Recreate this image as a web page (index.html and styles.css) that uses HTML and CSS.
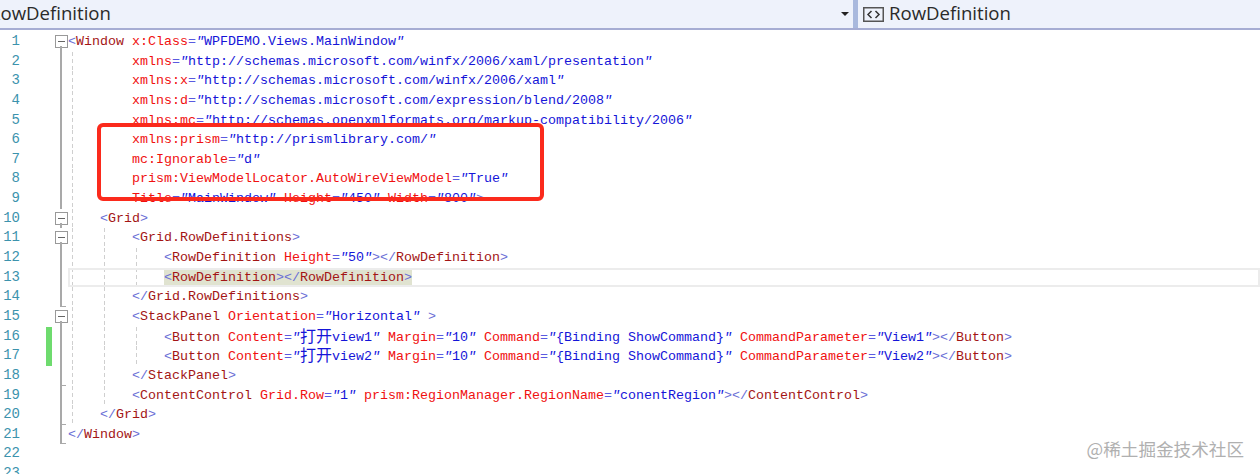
FILE: index.html
```html
<!DOCTYPE html>
<html lang="en">
<head>
<meta charset="utf-8">
<title>MainWindow.xaml</title>
<link rel="stylesheet" href="styles.css">
</head>
<body>
<header class="navbar">
  <div class="nav-left"><span class="nav-text cut">RowDefinition</span><span class="caret"></span></div>
  <div class="nav-right">
    <svg class="tag-icon" width="21" height="15" viewBox="0 0 21 15"><rect x="0.75" y="0.75" width="19.5" height="13.5" fill="none" stroke="#555" stroke-width="1.5"/><path d="M8.5 4 5 7.500l3.500 3.500M12.500 4 16 7.500 12.500 11" fill="none" stroke="#333" stroke-width="1.500"/></svg>
    <span class="nav-text">RowDefinition</span>
  </div>
</header>
<main class="editor">
<div class="line"><span class="num">1</span><span class="chg"></span><span class="fold box first"></span><code class="code"><s>&lt;</s><b>Window</b> <em>x:Class</em><s2>=</s2><i>"</i><u>WPFDEMO.Views.MainWindow</u><i>"</i></code></div>
<div class="line g1"><span class="num">2</span><span class="chg"></span><span class="fold bar"></span><code class="code">        <em>xmlns</em><s2>=</s2><i>"</i><u>http://schemas.microsoft.com/winfx/2006/xaml/presentation</u><i>"</i></code></div>
<div class="line g1"><span class="num">3</span><span class="chg"></span><span class="fold bar"></span><code class="code">        <em>xmlns:x</em><s2>=</s2><i>"</i><u>http://schemas.microsoft.com/winfx/2006/xaml</u><i>"</i></code></div>
<div class="line g1"><span class="num">4</span><span class="chg"></span><span class="fold bar"></span><code class="code">        <em>xmlns:d</em><s2>=</s2><i>"</i><u>http://schemas.microsoft.com/expression/blend/2008</u><i>"</i></code></div>
<div class="line g1"><span class="num">5</span><span class="chg"></span><span class="fold bar"></span><code class="code">        <em>xmlns:mc</em><s2>=</s2><i>"</i><u>http://schemas.openxmlformats.org/markup-compatibility/2006</u><i>"</i></code></div>
<div class="line g1"><span class="num">6</span><span class="chg"></span><span class="fold bar"></span><code class="code">        <em>xmlns:prism</em><s2>=</s2><i>"</i><u>http://prismlibrary.com/</u><i>"</i></code></div>
<div class="line g1"><span class="num">7</span><span class="chg"></span><span class="fold bar"></span><code class="code">        <em>mc:Ignorable</em><s2>=</s2><i>"</i><u>d</u><i>"</i></code></div>
<div class="line g1"><span class="num">8</span><span class="chg"></span><span class="fold bar"></span><code class="code">        <em>prism:ViewModelLocator.AutoWireViewModel</em><s2>=</s2><i>"</i><u>True</u><i>"</i></code></div>
<div class="line g1"><span class="num">9</span><span class="chg"></span><span class="fold bar"></span><code class="code">        <em>Title</em><s2>=</s2><i>"</i><u>MainWindow</u><i>"</i> <em>Height</em><s2>=</s2><i>"</i><u>450</u><i>"</i> <em>Width</em><s2>=</s2><i>"</i><u>800</u><i>"</i><s>&gt;</s></code></div>
<div class="line g1"><span class="num">10</span><span class="chg"></span><span class="fold box"></span><code class="code">    <s>&lt;</s><b>Grid</b><s>&gt;</s></code></div>
<div class="line g1 g2"><span class="num">11</span><span class="chg"></span><span class="fold box"></span><code class="code">        <s>&lt;</s><b>Grid.RowDefinitions</b><s>&gt;</s></code></div>
<div class="line g1 g2 g3"><span class="num">12</span><span class="chg"></span><span class="fold bar"></span><code class="code">            <s>&lt;</s><b>RowDefinition</b> <em>Height</em><s2>=</s2><i>"</i><u>50</u><i>"</i><s>&gt;&lt;/</s><b>RowDefinition</b><s>&gt;</s></code></div>
<div class="line g1 g2 g3 current"><span class="num">13</span><span class="chg"></span><span class="fold bar"></span><code class="code">            <mark><s>&lt;</s><b>RowDefinition</b><s>&gt;&lt;/</s><b>RowDefinition</b><s>&gt;</s></mark></code></div>
<div class="line g1 g2"><span class="num">14</span><span class="chg"></span><span class="fold bar end"></span><code class="code">        <s>&lt;/</s><b>Grid.RowDefinitions</b><s>&gt;</s></code></div>
<div class="line g1 g2"><span class="num">15</span><span class="chg"></span><span class="fold box"></span><code class="code">        <s>&lt;</s><b>StackPanel</b> <em>Orientation</em><s2>=</s2><i>"</i><u>Horizontal</u><i>"</i> <s>&gt;</s></code></div>
<div class="line g1 g2 g3"><span class="num">16</span><span class="chg on"></span><span class="fold bar"></span><code class="code">            <s>&lt;</s><b>Button</b> <em>Content</em><s2>=</s2><i>"</i><u><span class="cjk">打开</span>view1</u><i>"</i> <em>Margin</em><s2>=</s2><i>"</i><u>10</u><i>"</i> <em>Command</em><s2>=</s2><i>"</i><u>{Binding ShowCommand}</u><i>"</i> <em>CommandParameter</em><s2>=</s2><i>"</i><u>View1</u><i>"</i><s>&gt;&lt;/</s><b>Button</b><s>&gt;</s></code></div>
<div class="line g1 g2 g3"><span class="num">17</span><span class="chg on"></span><span class="fold bar"></span><code class="code">            <s>&lt;</s><b>Button</b> <em>Content</em><s2>=</s2><i>"</i><u><span class="cjk">打开</span>view2</u><i>"</i> <em>Margin</em><s2>=</s2><i>"</i><u>10</u><i>"</i> <em>Command</em><s2>=</s2><i>"</i><u>{Binding ShowCommand}</u><i>"</i> <em>CommandParameter</em><s2>=</s2><i>"</i><u>View2</u><i>"</i><s>&gt;&lt;/</s><b>Button</b><s>&gt;</s></code></div>
<div class="line g1 g2"><span class="num">18</span><span class="chg"></span><span class="fold bar end"></span><code class="code">        <s>&lt;/</s><b>StackPanel</b><s>&gt;</s></code></div>
<div class="line g1 g2"><span class="num">19</span><span class="chg"></span><span class="fold bar"></span><code class="code">        <s>&lt;</s><b>ContentControl</b> <em>Grid.Row</em><s2>=</s2><i>"</i><u>1</u><i>"</i> <em>prism:RegionManager.RegionName</em><s2>=</s2><i>"</i><u>conentRegion</u><i>"</i><s>&gt;&lt;/</s><b>ContentControl</b><s>&gt;</s></code></div>
<div class="line g1"><span class="num">20</span><span class="chg"></span><span class="fold bar end"></span><code class="code">    <s>&lt;/</s><b>Grid</b><s>&gt;</s></code></div>
<div class="line"><span class="num">21</span><span class="chg"></span><span class="fold bar end"></span><code class="code"><s>&lt;/</s><b>Window</b><s>&gt;</s></code></div>
<div class="line"><span class="num">22</span><span class="chg"></span><span class="fold"></span><code class="code"></code></div>
<div class="line"><span class="num">23</span><span class="chg"></span><span class="fold"></span><code class="code"></code></div>
</main>
<div class="callout"></div>
<div class="watermark">@稀土掘金技术社区</div>
</body>
</html>
```
FILE: styles.css
```css
:root {
  --dash: repeating-linear-gradient(#cfcfcf 0 4px, transparent 4px 7px);
}
* { box-sizing: border-box; }
html, body { margin: 0; height: 474px; overflow: hidden; background: #fff; }
body { position: relative; }

.navbar {
  display: flex;
  height: 30px;
  background: #eef2fb;
  border-bottom: 2px solid #a6add3;
}
.nav-left {
  width: 853px;
  display: flex;
  align-items: center;
  justify-content: space-between;
  padding-right: 4px;
  overflow: hidden;
}
.nav-right {
  flex: 1;
  display: flex;
  align-items: center;
  gap: 5px;
  padding-left: 5px;
  border-left: 5px solid #a9b9dd;
}
.nav-text {
  font-family: "Open Sans", "Noto Sans", sans-serif;
  font-size: 18.600px;
  line-height: 26px;
  padding-bottom: 2px;
  color: #2a2a2a;
}
.cut { margin-left: -11px; }
.caret {
  width: 0;
  height: 0;
  border-left: 4px solid transparent;
  border-right: 4px solid transparent;
  border-top: 4px solid #222;
}

.editor { padding-top: 2px; }
.line {
  position: relative;
  display: flex;
  height: 19.650px;
  font-family: "Liberation Mono", "Noto Sans CJK SC", monospace;
  font-size: 13.334px;
  line-height: 19.650px;
}
.num { width: 20px; text-align: right; color: #3c93ad; font-size: 14px; }
.chg { width: 6px; margin-left: 26px; }
.chg.on { background: #6edb6e; }
.fold { position: relative; width: 13px; margin-left: 3px; }
.bar::before {
  content: "";
  position: absolute;
  left: 5px;
  top: 0;
  bottom: 0;
  width: 2px;
  background: #a9a9a9;
}
.end::after {
  content: "";
  position: absolute;
  left: 5px;
  bottom: 0;
  width: 6px;
  height: 1px;
  background: #a9a9a9;
}
.box::before {
  content: "";
  position: absolute;
  left: 0;
  top: 3px;
  width: 11px;
  height: 11px;
  background: linear-gradient(#666, #666) center / 7px 1px no-repeat, #fff;
  border: 1px solid #999;
}
.box::after {
  content: "";
  position: absolute;
  left: 5px;
  top: 14px;
  bottom: 0;
  width: 2px;
  background: #a9a9a9;
}
.code {
  flex: 1;
  font: inherit;
  white-space: pre;
  background-image: var(--g1, none), var(--g2, none), var(--g3, none);
  background-position: 4px 0, 36px 0, 68px 0;
  background-size: 1px 100%;
  background-repeat: no-repeat;
}
.g1 { --g1: var(--dash); }
.g2 { --g2: var(--dash); }
.g3 { --g3: var(--dash); }
.current::after {
  content: "";
  position: absolute;
  left: 68px;
  right: 0;
  top: 0;
  bottom: 0;
  border: 2px solid #ececec;
  pointer-events: none;
}
mark { background: #e0e3d0; color: inherit; }
s, s2, b, em, i, u { font-weight: normal; text-decoration: none; }
s { color: #6b6fd6; }
s2 { color: #5a5ae0; }
b { color: #a31515; }
em { font-style: normal; color: #f01010; }
i { font-style: italic; color: #1515e0; }
u { color: #1515d8; }
.cjk {
  font-family: "Noto Sans CJK SC", sans-serif;
  font-size: 16px;
  line-height: 1;
  vertical-align: -1px;
}

.callout {
  position: absolute;
  left: 97px;
  top: 123px;
  width: 447px;
  height: 78px;
  border: 4.500px solid #fb2a1c;
  border-radius: 6px;
}
.watermark {
  position: absolute;
  right: 16px;
  top: 437px;
  font-family: "Noto Sans CJK SC", sans-serif;
  font-size: 17.600px;
  line-height: 24px;
  color: #b0b0b0;
}
```
